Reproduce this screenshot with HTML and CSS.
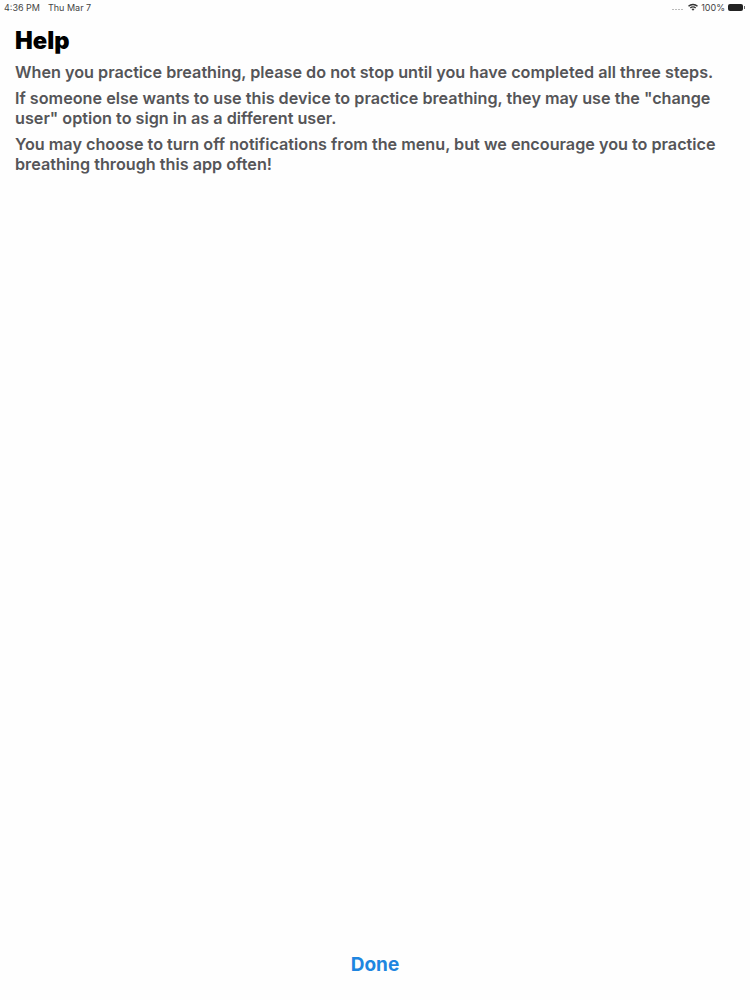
FILE: index.html
```html
<!DOCTYPE html>
<html lang="en">
<head>
    <meta charset="UTF-8">
    <meta name="viewport" content="width=device-width, initial-scale=1.0">
    <title>Help</title>
    <link rel="stylesheet" href="styles.css">
</head>
<body>
    <div class="screen">
        <div class="status-bar">
            <div class="status-left">
                <span>4:36 PM</span>
                <span>Thu Mar 7</span>
            </div>
            <div class="status-right">
                <div class="signal">
                    <i></i><i></i><i></i><i></i>
                </div>
                <svg class="wifi" width="10" height="8" viewBox="0 0 12 9">
                    <path d="M0 3 A8.5 8.5 0 0 1 12 3 L10.8 4.3 A6.8 6.8 0 0 0 1.2 4.3 Z" fill="#333"/>
                    <path d="M2.2 5.2 A5.4 5.4 0 0 1 9.8 5.2 L8.6 6.4 A3.7 3.7 0 0 0 3.4 6.4 Z" fill="#333"/>
                    <path d="M4.3 7.2 A2.4 2.4 0 0 1 7.7 7.2 L6 9 Z" fill="#333"/>
                </svg>
                <span>100%</span>
                <div class="battery"></div>
                <div class="battery-cap"></div>
            </div>
        </div>

        <div class="content">
            <h1>Help</h1>
            <p>When you practice breathing, please do not stop until you have completed all three steps.</p>
            <p>If someone else wants to use this device to practice breathing, they may use the "change user" option to sign in as a different user.</p>
            <p>You may choose to turn off notifications from the menu, but we encourage you to practice breathing through this app often!</p>
        </div>

        <div class="footer">
            <button class="done-button">Done</button>
        </div>
    </div>
</body>
</html>
```

FILE: styles.css
```css
html, body {
    margin: 0;
    padding: 0;
    background: #fefefe;
}

body {
    font-family: Inter, "Liberation Sans", sans-serif;
}

.screen {
    height: 1000px;
    display: flex;
    flex-direction: column;
    overflow: hidden;
}

.status-bar {
    height: 14px;
    padding: 0 5px 0 4px;
    display: flex;
    justify-content: space-between;
    align-items: center;
    font-size: 9px;
    color: #444;
}

.status-left {
    display: flex;
    gap: 8px;
}

.status-right {
    display: flex;
    align-items: center;
    gap: 3px;
}

.signal {
    display: flex;
    gap: 1px;
    margin-right: 2px;
    align-self: flex-end;
    margin-bottom: 3px;
}

.signal i {
    width: 2px;
    height: 1px;
    background: #bbb;
}

.battery {
    width: 15px;
    height: 7px;
    background: #222;
    border-radius: 2px;
}

.battery-cap {
    width: 1px;
    height: 3px;
    margin-left: -2px;
    background: #666;
}

.content {
    flex: 1;
    padding: 13px 15px 0;
}

h1 {
    margin: 0 0 7px;
    font-size: 23.7px;
    line-height: 28px;
    font-weight: 900;
    color: #000;
}

p {
    margin: 0 0 6px;
    font-size: 16.2px;
    line-height: 20px;
    font-weight: 600;
    color: #555558;
}

.footer {
    height: 48px;
    display: flex;
    justify-content: center;
}

.done-button {
    height: 24px;
    padding: 0;
    border: none;
    background: none;
    font-family: inherit;
    font-size: 19px;
    font-weight: 700;
    color: #1e86e0;
}
```
